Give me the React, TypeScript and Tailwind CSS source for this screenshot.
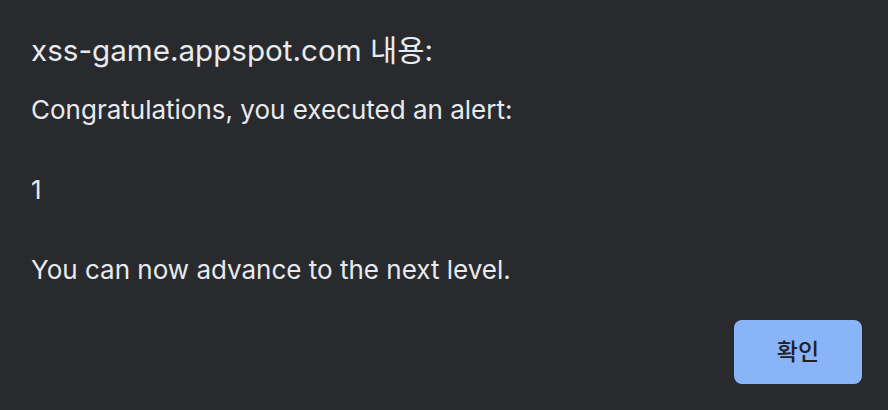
export default function App() {
  return (
    <div
      className="w-[888px] h-[410px] bg-[#292a2d] text-[#e8eaed] flex flex-col pl-[31px] pr-[26px] pt-[32px]"
      style={{ fontFamily: 'Inter, "Noto Sans CJK KR", sans-serif' }}
    >
      <div className="text-[29.6px] leading-[36px]">xss-game.appspot.com 내용:</div>
      <div className="mt-[22px] text-[26px] leading-[40px] whitespace-pre-line">
        {"Congratulations, you executed an alert:\n\n1\n\nYou can now advance to the next level."}
      </div>
      <div className="flex justify-end mt-[30px]">
        <button className="w-[128px] h-[64px] rounded-[8px] bg-[#8ab4f8] text-[#202124] text-[23px] font-medium">
          확인
        </button>
      </div>
    </div>
  );
}
